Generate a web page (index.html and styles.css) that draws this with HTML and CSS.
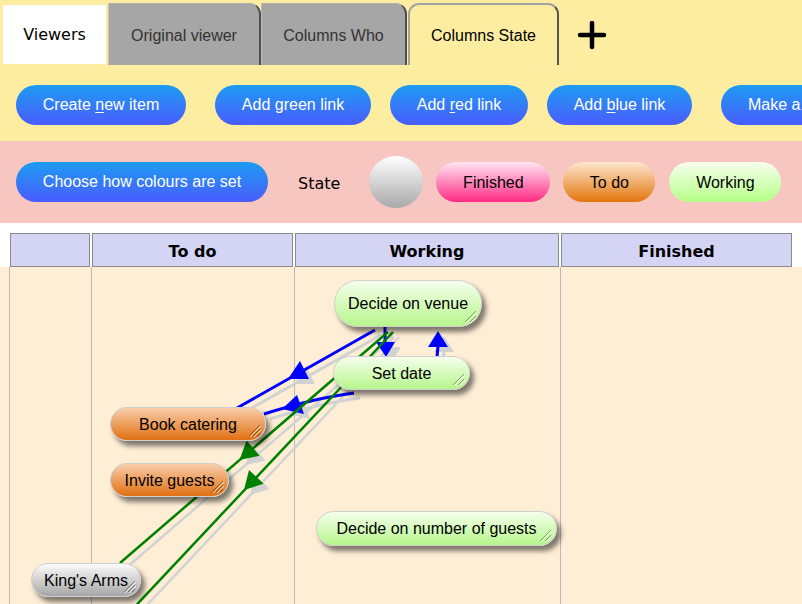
FILE: index.html
```html
<!DOCTYPE html>
<html>
<head>
<meta charset="utf-8">
<link rel="stylesheet" href="styles.css">
</head>
<body>
<div class="top">
  <div class="tabs">
    <div class="tab tab-viewers">Viewers</div>
    <div class="tab tab-gray tab-orig">Original viewer</div>
    <div class="tab tab-gray tab-who">Columns Who</div>
    <div class="tab tab-active">Columns State</div>
    <svg class="plus" width="30" height="30" viewBox="0 0 30 30"><path d="M3 14 H27 M15 2 V26" stroke="#000" stroke-width="4.5" stroke-linecap="round"/></svg>
  </div>
  <div class="actions">
    <div class="btn b-create"><span>Create <u>n</u>ew item</span></div>
    <div class="btn b-green wide"><span>Add green link</span></div>
    <div class="btn b-red"><span>Add <u>r</u>ed link</span></div>
    <div class="btn b-blue"><span>Add <u>b</u>lue link</span></div>
    <div class="btn b-make wide"><span>Make a new viewer</span></div>
  </div>
</div>
<div class="legend">
  <div class="btn b-choose"><span>Choose how colours are set</span></div>
  <div class="state-label">State</div>
  <div class="circle"></div>
  <div class="pill pill-finished">Finished</div>
  <div class="pill pill-todo">To do</div>
  <div class="pill pill-working">Working</div>
</div>
<div class="gap"></div>
<div class="header">
  <div class="hcell h1"></div>
  <div class="hcell h2">To do</div>
  <div class="hcell h3">Working</div>
  <div class="hcell h4">Finished</div>
</div>
<div class="board">
  <div class="cols">
    <div class="col c1"></div>
    <div class="col c2"></div>
    <div class="col c3"></div>
    <div class="col c4"></div>
  </div>
  <svg class="links" width="802" height="337" viewBox="0 267 802 337">
    <g transform="translate(6,5)" fill="#d2d2d2" stroke="#d2d2d2">
      <path d="M375,330 L237,408" stroke-width="3" fill="none"/>
      <polygon points="288,379 309,379 300,361" stroke="none"/>
      <path d="M354,393 Q315,398 264,414" stroke-width="3" fill="none"/>
      <polygon points="282,409 304,414 297,395" stroke="none"/>
      <path d="M385,327 L385,345" stroke-width="3" fill="none"/>
      <polygon points="376,342 395,342 386,357" stroke="none"/>
      <path d="M437,357 L438,346" stroke-width="3" fill="none"/>
      <polygon points="438,331 428,347 448,347" stroke="none"/>
      <path d="M388,332 L120,563" stroke-width="2.5" fill="none"/>
      <polygon points="239.5,460 259.6,455.8 246.6,440.6" stroke="none"/>
      <path d="M393,332 L127,615" stroke-width="2.5" fill="none"/>
      <polygon points="244,490 263.6,483.8 249,470" stroke="none"/>
    </g>
    <g fill="#0000ff" stroke="#0000ff">
      <path d="M375,330 L237,408" stroke-width="3" fill="none"/>
      <polygon points="288,379 309,379 300,361" stroke="none"/>
      <path d="M354,393 Q315,398 264,414" stroke-width="3" fill="none"/>
      <polygon points="282,409 304,414 297,395" stroke="none"/>
      <path d="M385,327 L385,345" stroke-width="3" fill="none"/>
      <polygon points="376,342 395,342 386,357" stroke="none"/>
      <path d="M437,357 L438,346" stroke-width="3" fill="none"/>
      <polygon points="438,331 428,347 448,347" stroke="none"/>
    </g>
    <g fill="#008000" stroke="#008000">
      <path d="M388,332 L120,563" stroke-width="2.5" fill="none"/>
      <polygon points="239.5,460 259.6,455.8 246.6,440.6" stroke="none"/>
      <path d="M393,332 L127,615" stroke-width="2.5" fill="none"/>
      <polygon points="244,490 263.6,483.8 249,470" stroke="none"/>
    </g>
  </svg>
  <div class="node n-green n-tall" style="left:334px;top:13px;width:148px;height:47px">Decide on venue<svg class="grip" width="14" height="14" viewBox="0 0 14 14"><path d="M2,13 L13,2 M7,13 L13,7" stroke="rgba(0,0,0,0.35)" stroke-width="1"/><path d="M3,14 L14,3 M8,14 L14,8" stroke="rgba(255,255,255,0.8)" stroke-width="1"/></svg></div>
  <div class="node n-green" style="left:333px;top:89px;width:137px;height:34px">Set date<svg class="grip" width="14" height="14" viewBox="0 0 14 14"><path d="M2,13 L13,2 M7,13 L13,7" stroke="rgba(0,0,0,0.35)" stroke-width="1"/><path d="M3,14 L14,3 M8,14 L14,8" stroke="rgba(255,255,255,0.8)" stroke-width="1"/></svg></div>
  <div class="node n-orange" style="left:110px;top:140px;width:156px;height:34px">Book catering<svg class="grip" width="14" height="14" viewBox="0 0 14 14"><path d="M2,13 L13,2 M6,13 L13,6 M10,13 L13,10" stroke="rgba(90,40,0,0.55)" stroke-width="1"/><path d="M3,14 L14,3 M7,14 L14,7" stroke="rgba(255,255,255,0.7)" stroke-width="1"/></svg></div>
  <div class="node n-orange" style="left:110px;top:196px;width:119px;height:34px">Invite guests<svg class="grip" width="14" height="14" viewBox="0 0 14 14"><path d="M2,13 L13,2 M6,13 L13,6 M10,13 L13,10" stroke="rgba(90,40,0,0.55)" stroke-width="1"/><path d="M3,14 L14,3 M7,14 L14,7" stroke="rgba(255,255,255,0.7)" stroke-width="1"/></svg></div>
  <div class="node n-green" style="left:316px;top:244px;width:241px;height:35px">Decide on number of guests<svg class="grip" width="14" height="14" viewBox="0 0 14 14"><path d="M2,13 L13,2 M7,13 L13,7" stroke="rgba(0,0,0,0.35)" stroke-width="1"/><path d="M3,14 L14,3 M8,14 L14,8" stroke="rgba(255,255,255,0.8)" stroke-width="1"/></svg></div>
  <div class="node n-gray" style="left:31px;top:296px;width:110px;height:34px">King's Arms<svg class="grip" width="14" height="14" viewBox="0 0 14 14"><path d="M2,13 L13,2 M6,13 L13,6 M10,13 L13,10" stroke="rgba(0,0,0,0.4)" stroke-width="1"/><path d="M3,14 L14,3 M7,14 L14,7" stroke="rgba(255,255,255,0.8)" stroke-width="1"/></svg></div>
</div>
</body>
</html>
```

FILE: styles.css
```css
* { box-sizing: border-box; }
html, body { margin: 0; padding: 0; }
body {
  width: 802px;
  height: 604px;
  overflow: hidden;
  background: #ffffff;
  font-family: "Liberation Sans", Arial, sans-serif;
  font-size: 16px;
  color: #000;
}
.top {
  background: #fdeda1;
  height: 141px;
}
.tabs {
  display: flex;
  align-items: flex-end;
  height: 65px;
  padding-left: 3px;
}
.tab {
  display: flex;
  align-items: center;
  justify-content: center;
  font-size: 16px;
}
.tab-viewers {
  width: 103px;
  height: 59px;
  margin-bottom: 1px;
  background: #ffffff;
  font-family: "DejaVu Sans", Verdana, sans-serif;
  margin-right: 2px;
}
.tab-gray {
  height: 62px;
  background: #a6a6a6;
  color: #333;
  border-left: 1px solid #bdbdbd;
  border-top: 1px solid #b0b0b0;
  border-right: 2px solid #4d4d4d;
  border-top-right-radius: 11px;
  padding-top: 2px;
}
.tab-orig { width: 153px; }
.tab-who { width: 146px; }
.tab-active {
  width: 151px;
  height: 62px;
  margin-left: 1px;
  background: #fdeda1;
  border: 2px solid #a3a3a3;
  border-right-color: #555;
  border-bottom: none;
  border-radius: 11px 11px 0 0;
  padding-top: 2px;
}
.plus {
  align-self: center;
  margin-left: 18px;
  margin-top: 6px;
}
.actions {
  display: flex;
  gap: 19px;
  padding-left: 16px;
  margin-top: 20px;
  white-space: nowrap;
  overflow: hidden;
}
.btn {
  flex: none;
  height: 40px;
  border-radius: 20px;
  background: linear-gradient(#1d9cf2, #4a5cfd);
  color: #ffffff;
  display: flex;
  align-items: center;
  justify-content: center;
  font-size: 16px;
  white-space: nowrap;
}
.btn span { white-space: pre; }
.btn u { text-decoration-thickness: 1px; text-underline-offset: 2px; }
.wide { margin-left: 10px; }
.b-create { width: 170px; }
.b-green { width: 156px; }
.b-red { width: 138px; }
.b-blue { width: 145px; }
.b-make { width: 180px; justify-content: flex-start; padding-left: 27px; }
.legend {
  height: 82px;
  background: #f8c6c0;
  display: flex;
  align-items: center;
  padding-left: 16px;
}
.b-choose { width: 252px; }
.state-label {
  margin-left: 30px;
  font-family: "DejaVu Sans", Verdana, sans-serif;
  font-size: 16px;
  padding-top: 2px;
}
.circle {
  margin-left: 29px;
  width: 54px;
  height: 52px;
  border-radius: 50%;
  background: linear-gradient(#ffffff, #a9a9a9);
}
.pill {
  flex: none;
  height: 40px;
  border-radius: 20px;
  display: flex;
  align-items: center;
  justify-content: center;
  margin-left: 13px;
  padding-top: 1px;
}
.pill-finished { width: 114px; background: linear-gradient(#ffe6f2, #ff2a84); }
.pill-todo { width: 92px; background: linear-gradient(#fde6cf, #e2760c); }
.pill-working { width: 112px; margin-left: 14px; background: linear-gradient(#f6ffee, #b6ff88); }
.gap { height: 10px; background: #ffffff; }
.header {
  display: flex;
  gap: 2px;
  padding-left: 10px;
  height: 34px;
  background: #ffffff;
}
.hcell {
  height: 34px;
  background: #d4d4f5;
  border: 1px solid #8a8a8a;
  display: flex;
  align-items: center;
  justify-content: center;
  font-family: "DejaVu Sans", Verdana, sans-serif;
  font-weight: bold;
  font-size: 16px;
  padding-top: 2px;
}
.h1 { width: 80px; }
.h2 { width: 201px; }
.h3 { width: 264px; }
.h4 { width: 231px; }
.board {
  position: relative;
  height: 337px;
  background: #feeed6;
  overflow: hidden;
}
.cols {
  display: flex;
  height: 100%;
  padding-left: 9px;
}
.col {
  height: 100%;
  border-left: 1px solid #b9b9b9;
}
.c1 { width: 82px; }
.c2 { width: 203px; }
.c3 { width: 266px; }
.c4 { width: 240px; }
.links {
  position: absolute;
  left: 0;
  top: 0;
}
.node {
  position: absolute;
  display: flex;
  align-items: center;
  justify-content: center;
  border: 1px solid #cfcfcf;
  border-radius: 18px;
  box-shadow: 4px 5px 5px rgba(0, 0, 0, 0.5);
  font-size: 16px;
  color: #000;
  white-space: nowrap;
  padding-top: 1px;
}
.n-tall { border-radius: 24px; }
.n-green { background: linear-gradient(#f5ffec, #b7f68c); }
.n-orange { background: linear-gradient(#f8ceaa, #e07012); }
.n-gray { background: linear-gradient(#fbfbfb, #a6a6a6); }
.grip {
  position: absolute;
  right: 4px;
  bottom: 3px;
}
```
